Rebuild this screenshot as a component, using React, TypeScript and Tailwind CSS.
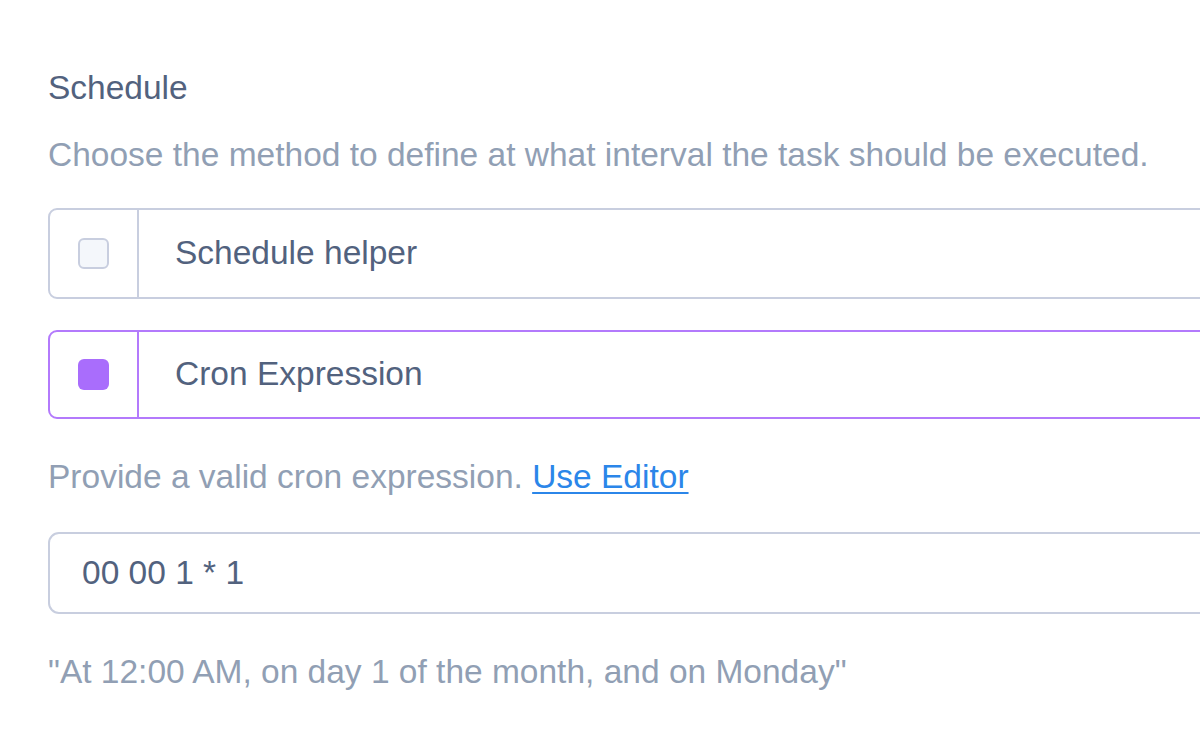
import React from "react";

export default function App() {
  return (
    <div className="min-h-[751px] w-[1200px] overflow-hidden bg-white pl-12" style={{ fontFamily: '"Liberation Sans", Arial, sans-serif' }}>
      <div className="w-[1200px] pt-[70px]">
        <div className="text-[33.5px] leading-[36px] text-[#52627e]">Schedule</div>
        <div className="mt-[31px] text-[33.5px] leading-[36px] text-[#919fb4] whitespace-nowrap">
          Choose the method to define at what interval the task should be executed.
        </div>
        <div className="mt-[35px] flex h-[91px] rounded-[9px] border-2 border-[#c8cedf]">
          <div className="flex w-[89px] items-center justify-center border-r-2 border-[#c8cedf]">
            <div className="h-[31px] w-[31px] rounded-[6px] border-2 border-[#c8cedf] bg-[#f4f7fb]" />
          </div>
          <div className="flex items-center pl-[36px] text-[33.5px] text-[#52627e]">Schedule helper</div>
        </div>
        <div className="mt-[31px] flex h-[89px] rounded-[9px] border-2 border-[#b37afc]">
          <div className="flex w-[89px] items-center justify-center border-r-2 border-[#b37afc]">
            <div className="h-[31px] w-[31px] rounded-[6px] bg-[#a96dfc]" />
          </div>
          <div className="flex items-center pl-[36px] text-[33.5px] text-[#52627e]">Cron Expression</div>
        </div>
        <div className="mt-[40px] text-[33.5px] leading-[36px] text-[#919fb4] whitespace-nowrap">
          Provide a valid cron expression.{" "}
          <a href="#" className="text-[#2b86e9] underline decoration-2 underline-offset-[4px]">Use Editor</a>
        </div>
        <div className="mt-[37px] flex h-[82px] items-center rounded-[11px] border-2 border-[#c8cedf] pl-[32px] text-[33.5px] text-[#52627e]">
          00 00 1 * 1
        </div>
        <div className="mt-[40px] text-[33.5px] leading-[36px] text-[#919fb4] whitespace-nowrap">
          "At 12:00 AM, on day 1 of the month, and on Monday"
        </div>
      </div>
    </div>
  );
}
